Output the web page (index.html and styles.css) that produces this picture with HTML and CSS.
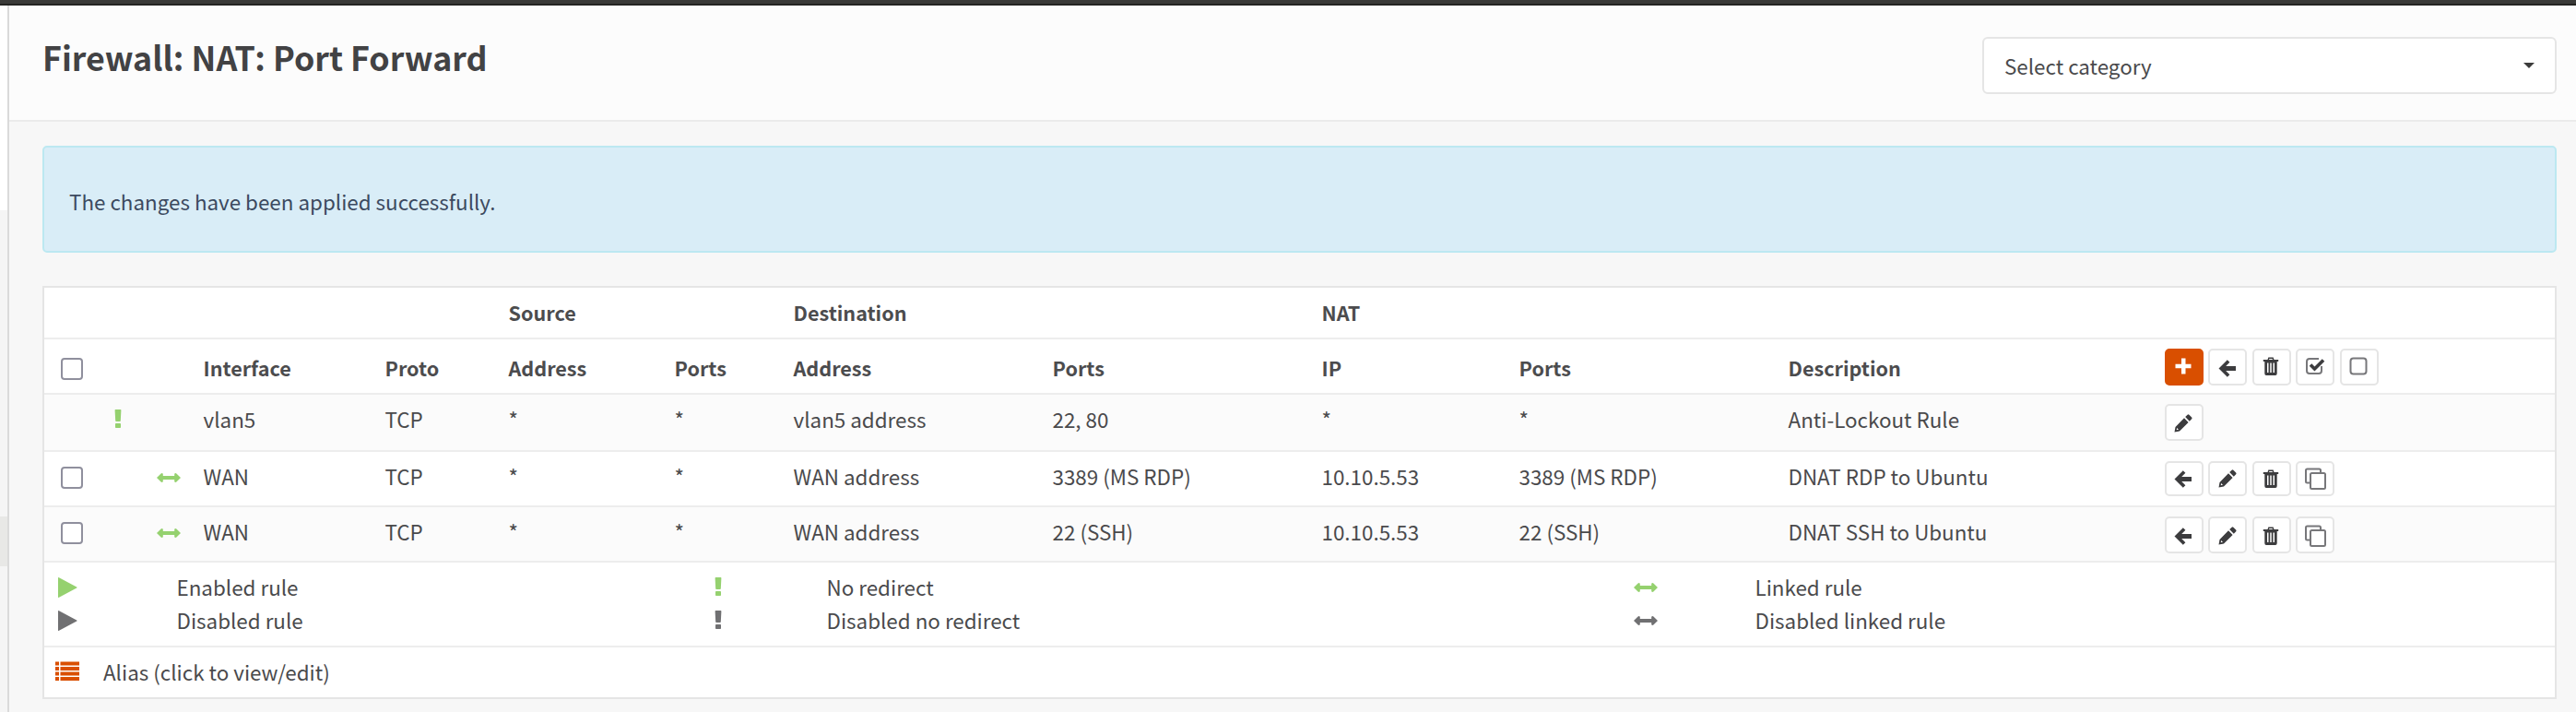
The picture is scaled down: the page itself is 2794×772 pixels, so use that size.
FILE: index.html
```html
<!DOCTYPE html>
<html lang="en">
<head>
<meta charset="utf-8">
<title>Firewall: NAT: Port Forward</title>
<link rel="stylesheet" href="styles.css">
</head>
<body>
<svg class="sprite" width="0" height="0" aria-hidden="true">
  <symbol id="i-bang" viewBox="0 0 8 20"><path d="M.6.8Q.6 0 1.400 0H6.600Q7.400 0 7.400.8L6.800 12.200Q6.700 13 6 13H2Q1.300 13 1.200 12.200ZM1.800 15H6.200Q7 15 7 15.800V19.200Q7 20 6.200 20H1.800Q1 20 1 19.200V15.800Q1 15 1.800 15Z"/></symbol>
  <symbol id="i-arrows" viewBox="0 0 26 10"><path d="M0 5 4.600.4Q6.300-.4 6.800 1V3.100H19.200V1Q19.700-.4 21.400.4L26 5 21.400 9.600Q19.700 10.400 19.200 9V6.900H6.800V9Q6.300 10.400 4.600 9.600Z"/></symbol>
  <symbol id="i-play" viewBox="0 0 21 22"><path d="M0 .8Q0-.3 1 .3L20.200 10.400Q21 11 20.200 11.600L1 21.700Q0 22.300 0 21.200Z"/></symbol>
  <symbol id="i-list" viewBox="0 0 26 21"><path d="M0 .5h4v3.900H0zM5.500.5H26v3.900H5.500zM0 6h4v3.900H0zM5.500 6H26v3.900H5.500zM0 11.500h4v3.900H0zM5.500 11.500H26v3.900H5.500zM0 17h4v3.900H0zM5.500 17H26v3.900H5.500z"/></symbol>
  <symbol id="i-plus" viewBox="0 0 24 24"><path d="M10 3.500h4.500v6.300h6v4.500h-6v6.200H10v-6.200H3.500V9.800H10z"/></symbol>
  <symbol id="i-back" viewBox="0 0 24 24"><path d="M2.500 12.500 11.800 3.200 14.400 5.800 10.200 10H21V15H10.200L14.400 19.200 11.800 21.800Z"/></symbol>
  <symbol id="i-trash" viewBox="0 0 24 24"><path fill-rule="evenodd" d="M8.500 5 9.300 2.500H14.700L15.500 5H20.200V7H18.700V20Q18.700 22 17 22H7Q5.300 22 5.300 20V7H3.800V5ZM10 5H14L13.600 3.900H10.400ZM8 8.500V19H9.500V8.500ZM11.250 8.500V19H12.750V8.500ZM14.500 8.500V19H16V8.500Z"/></symbol>
  <symbol id="i-pencil" viewBox="0 0 24 24"><path fill-rule="evenodd" d="M2.500 21.500 3.500 16 13 6.300 17.600 10.900 8 20.500ZM14.200 5.100 16.600 2.700Q17.500 1.900 18.400 2.700L21.200 5.500Q22 6.400 21.200 7.300L18.800 9.700ZM5.200 17 4.700 19.300 7 18.800Z"/></symbol>
  <symbol id="i-check" viewBox="0 0 24 24"><path class="thin" d="M19 12V17Q19 20 16 20H6Q3 20 3 17V7Q3 4 6 4H16"/><path class="thick" d="M7 10.500 11.500 15 21 5.500"/></symbol>
  <symbol id="i-square" viewBox="0 0 24 24"><rect class="thin" x="3.500" y="3.500" width="17" height="17" rx="3"/></symbol>
  <symbol id="i-clone" viewBox="0 0 24 24"><rect class="thin" x="7" y="6" width="16" height="17" rx="1.500"/><path class="thin" d="M7 16.500H3.500Q2 16.500 2 15V3Q2 1.500 3.500 1.500H16.500Q18 1.500 18 3V6"/></symbol>
</svg>

<div class="topbar"></div>
<div class="app">
  <aside class="sidebar"><div class="side-top"></div><div class="side-menu"></div><div class="side-active"></div></aside>
  <main class="main">
    <header class="page-head">
      <h1 class="title">Firewall: NAT: Port Forward</h1>
      <div class="select"><span>Select category</span><i class="caret"></i></div>
    </header>
    <div class="content">
      <div class="alert">The changes have been applied successfully.</div>
      <div class="panel">
        <table class="rules">
          <colgroup><col class="w-check"><col class="w-state"><col class="w-link"><col class="w-if"><col class="w-proto"><col class="w-src"><col class="w-sport"><col class="w-dst"><col class="w-dport"><col class="w-ip"><col class="w-nport"><col class="w-desc"><col></colgroup>
          <thead>
            <tr class="r-group"><th colspan="5"></th><th colspan="2">Source</th><th colspan="2">Destination</th><th colspan="4">NAT</th></tr>
            <tr class="r-head">
              <th><span class="box"></span></th><th></th><th></th><th>Interface</th><th>Proto</th><th>Address</th><th>Ports</th><th>Address</th><th>Ports</th><th>IP</th><th>Ports</th><th>Description</th>
              <th><div class="btns"><b class="btn primary"><svg><use href="#i-plus"/></svg></b><b class="btn low"><svg><use href="#i-back"/></svg></b><b class="btn"><svg><use href="#i-trash"/></svg></b><b class="btn"><svg><use href="#i-check"/></svg></b><b class="btn"><svg><use href="#i-square"/></svg></b></div></th>
            </tr>
          </thead>
          <tbody>
            <tr class="r-lock odd">
              <td></td><td><svg class="bang green"><use href="#i-bang"/></svg></td><td></td><td>vlan5</td><td>TCP</td><td>*</td><td>*</td><td>vlan5 address</td><td>22, 80</td><td>*</td><td>*</td><td>Anti-Lockout Rule</td>
              <td><div class="btns"><b class="btn low"><svg><use href="#i-pencil"/></svg></b></div></td>
            </tr>
            <tr class="r-rule">
              <td><span class="box"></span></td><td></td><td><svg class="arrows green"><use href="#i-arrows"/></svg></td><td>WAN</td><td>TCP</td><td>*</td><td>*</td><td>WAN address</td><td>3389 (MS RDP)</td><td>10.10.5.53</td><td>3389 (MS RDP)</td><td>DNAT RDP to Ubuntu</td>
              <td><div class="btns short"><b class="btn"><svg><use href="#i-back"/></svg></b><b class="btn"><svg><use href="#i-pencil"/></svg></b><b class="btn"><svg><use href="#i-trash"/></svg></b><b class="btn"><svg><use href="#i-clone"/></svg></b></div></td>
            </tr>
            <tr class="r-rule odd">
              <td><span class="box"></span></td><td></td><td><svg class="arrows green"><use href="#i-arrows"/></svg></td><td>WAN</td><td>TCP</td><td>*</td><td>*</td><td>WAN address</td><td>22 (SSH)</td><td>10.10.5.53</td><td>22 (SSH)</td><td>DNAT SSH to Ubuntu</td>
              <td><div class="btns"><b class="btn low"><svg><use href="#i-back"/></svg></b><b class="btn low"><svg><use href="#i-pencil"/></svg></b><b class="btn low"><svg><use href="#i-trash"/></svg></b><b class="btn low"><svg><use href="#i-clone"/></svg></b></div></td>
            </tr>
          </tbody>
        </table>
        <div class="legend">
          <svg class="play green"><use href="#i-play"/></svg><span>Enabled rule</span>
          <svg class="bang green"><use href="#i-bang"/></svg><span>No redirect</span>
          <svg class="arrows green"><use href="#i-arrows"/></svg><span>Linked rule</span>
          <svg class="play gray"><use href="#i-play"/></svg><span>Disabled rule</span>
          <svg class="bang gray"><use href="#i-bang"/></svg><span>Disabled no redirect</span>
          <svg class="arrows gray"><use href="#i-arrows"/></svg><span>Disabled linked rule</span>
        </div>
        <div class="alias"><svg class="list"><use href="#i-list"/></svg><span>Alias (click to view/edit)</span></div>
      </div>
    </div>
  </main>
</div>
</body>
</html>
```
FILE: styles.css
```css
* { box-sizing: border-box; }
body {
  margin: 0;
  height: 772px;
  overflow: hidden;
  background: #f7f7f7;
  color: #4a4a4c;
  font: 22.400px/30px "Noto Sans CJK SC", "Open Sans", sans-serif;
}
.sprite { display: none; }
.topbar { height: 6px; background: #3a3a38; border-bottom: 2px solid #242422; box-shadow: 0 1px 0 #b5b5b5; }
.app { display: flex; height: 766px; }
.sidebar { width: 10px; border-right: 2px solid #dadada; background: #f5f5f5; }
.side-top { height: 222px; background: #fff; }
.side-menu { height: 332px; }
.side-active { height: 54px; background: #e8e8e6; }
.main { flex: 1; }

.page-head {
  display: flex;
  justify-content: space-between;
  height: 126px;
  padding: 34px 21px 0 36px;
  background: #fcfcfc;
  border-bottom: 2px solid #ebebeb;
}
.title { margin: -1px 0 0; font-size: 35.800px; line-height: 44px; font-weight: 700; color: #424244; white-space: nowrap; }
.select {
  display: flex;
  justify-content: space-between;
  align-items: center;
  width: 623px;
  height: 62px;
  padding: 0 22px 1px 22px;
  border: 2px solid #e5e5e5;
  border-radius: 6px;
  background: #fff;
}
.caret { border: 6px solid transparent; border-top-color: #3c3c3b; border-bottom: 0; }

.content { padding: 26px 21px 0 36px; }
.alert {
  height: 116px;
  padding: 43px 27px 0;
  border: 2px solid #bce8f1;
  border-radius: 5px;
  background: #d9edf7;
  color: #3c4a60;
}
.panel { height: 448px; margin-top: 36px; border: 2px solid #e5e5e5; background: #fff; }

.rules { width: 2723px; table-layout: fixed; border-collapse: separate; border-spacing: 0; }
.rules th, .rules td { padding: 11px 0 0 11.500px; vertical-align: top; text-align: left; border-bottom: 2px solid #ededed; white-space: nowrap; }
.rules th { font-size: 21.600px; font-weight: 700; color: #4c4c4e; }
.rules .r-group th { padding-top: 12px; }
.w-check { width: 64px; } .w-state { width: 46px; } .w-link { width: 51px; }
.w-if { width: 197px; } .w-proto { width: 134px; } .w-src { width: 180px; }
.w-sport { width: 129px; } .w-dst { width: 281px; } .w-dport { width: 292px; }
.w-ip { width: 214px; } .w-nport { width: 292px; } .w-desc { width: 408px; }
.r-group { height: 56px; }
.r-head { height: 60px; }
.r-lock { height: 62px; }
.r-rule { height: 60px; }
.odd { background: #fbfbfb; }
.rules .r-head th { padding-top: 16px; }
.rules .r-head th:last-child, .rules td:last-child { padding-top: 10px; }

.box { display: block; width: 24px; height: 24px; margin: 5px 0 0 6.500px; border: 2px solid #8f8f9d; border-radius: 4px; background: #fff; }
.r-head .box { margin-top: 4px; }

svg { display: block; fill: currentColor; }
.thin { fill: none; stroke: #77777a; stroke-width: 2; }
.thick { fill: none; stroke: #3c3c3e; stroke-width: 3.600; }
.green { color: #95d16f; }
.gray { color: #707072; }
.bang { width: 8px; height: 20px; }
.arrows { width: 26px; height: 10px; }
.play { width: 21px; height: 22px; }
td .bang { margin-top: 5px; }
td .arrows { margin-top: 12px; }

.btns { display: flex; gap: 5.500px; }
.btn {
  display: flex;
  justify-content: center;
  width: 42px;
  height: 40px;
  padding: 5px 1px 0 0;
  border: 2px solid #e5e5e5;
  border-radius: 5px;
  background: #fff;
  color: #3c3c3e;
}
.btn.low { padding-top: 7px; }
.btn svg { width: 24px; height: 24px; }
.short .btn { height: 38px; }
.btn.primary { background: #d94f00; border-color: #d94f00; color: #fff; }

.legend {
  display: grid;
  grid-template-columns: 129px 583px 122px 875.500px 131.500px 1fr;
  grid-template-rows: 36px 36px;
  height: 92px;
  padding: 11px 0 0 14.500px;
  border-bottom: 2px solid #ededed;
}
.legend .play { margin-top: 5px; }
.legend .bang { margin-top: 5px; }
.legend .arrows { margin-top: 11px; }
.alias { display: flex; padding: 11px 12px 0; gap: 26px; }
.list { width: 26px; height: 21px; margin-top: 4px; color: #d94f00; }
```
